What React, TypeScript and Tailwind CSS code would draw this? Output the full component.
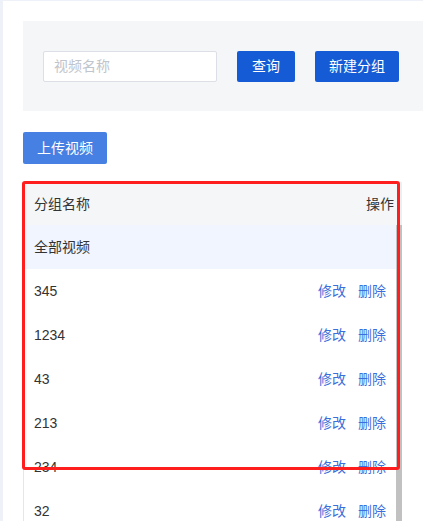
const rows = ["345", "1234", "43", "213", "234", "32"];

export default function App() {
  return (
    <div
      className="h-[521px] w-[423px] overflow-hidden bg-[#eef1f8] pl-[3px] pt-px"
      style={{ fontFamily: '"Liberation Sans", "Noto Sans CJK SC", sans-serif' }}
    >
      <div className="relative h-full w-[440px] bg-white pl-5 pt-5">
        {/* Search panel */}
        <div className="flex h-[90px] items-center gap-5 bg-[#f5f6f8] pl-5">
          <input
            className="h-[31px] w-[174px] rounded-[2px] border border-[#dcdfe6] bg-white px-[10px] text-[14px] text-[#333] outline-none placeholder:text-[#c0c4cc]"
            placeholder="视频名称"
          />
          <button className="h-[31px] w-[58px] rounded-[2px] bg-[#155bd5] text-[14px] text-white">
            查询
          </button>
          <button className="h-[31px] w-[84px] rounded-[2px] bg-[#155bd5] text-[14px] text-white">
            新建分组
          </button>
        </div>

        <button className="mt-[21px] h-8 w-[84px] rounded-[2px] bg-[#4680e2] text-[14px] text-white">
          上传视频
        </button>

        {/* Group table */}
        <div className="mt-[18px] w-[379px] border-l border-[#e6e6e6] text-[14px] leading-5 text-[#333]">
          <div className="flex h-[43px] items-center justify-between border-r border-[#ebeef5] bg-[#f5f6f8] pl-[10px] pr-[7px]">
            <span>分组名称</span>
            <span>操作</span>
          </div>
          <div className="flex">
            <div className="flex-1">
              <div className="flex h-[44px] items-center bg-[#f0f5ff] pl-[10px]">全部视频</div>
              {rows.map((name) => (
                <div key={name} className="flex h-[44px] items-center justify-between pl-[10px] pr-[10px]">
                  <span>{name}</span>
                  <div className="flex gap-3 text-[#3b6fdc]">
                    <span>修改</span>
                    <span>删除</span>
                  </div>
                </div>
              ))}
            </div>
            <div className="w-[6px] bg-[#c1c1c1]" />
          </div>
        </div>

        {/* Annotation box */}
        <div className="pointer-events-none absolute left-[19px] top-[180px] h-[289px] w-[378px] rounded-[3px] border-[3px] border-[#ff1e1e]" />
      </div>
    </div>
  );
}
